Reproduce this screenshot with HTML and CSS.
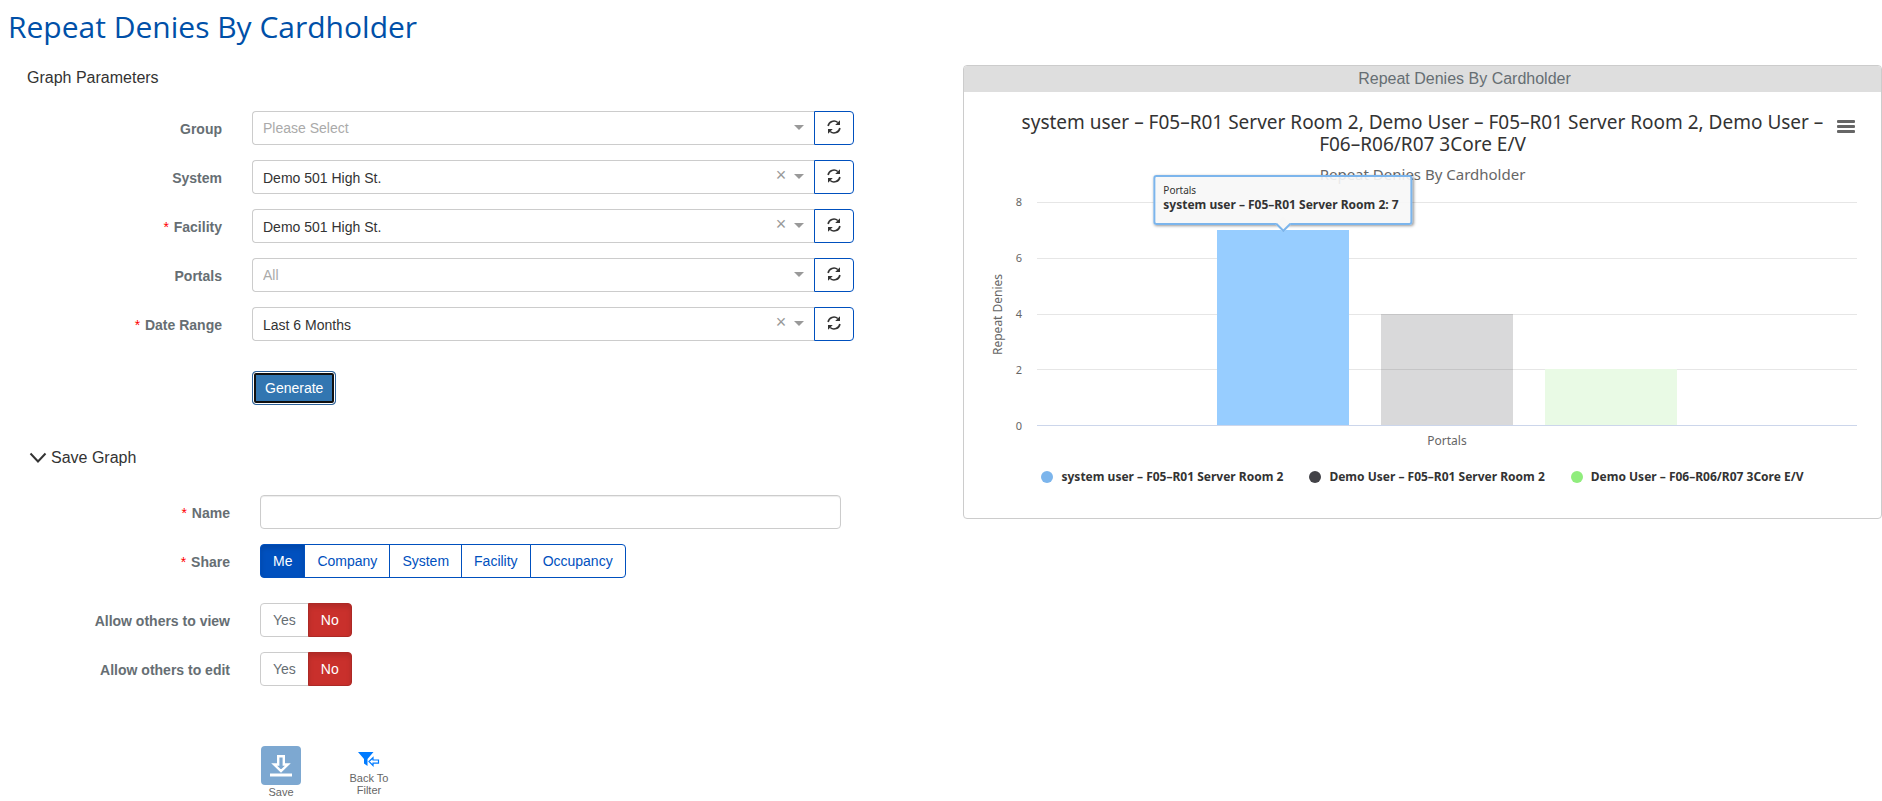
FILE: index.html
```html
<!DOCTYPE html>
<html lang="en">
<head>
<meta charset="utf-8">
<title>Repeat Denies By Cardholder</title>
<link rel="stylesheet" href="styles.css">
</head>
<body>
<svg class="sprite" aria-hidden="true">
  <symbol id="refresh" viewBox="0 0 14 14">
    <path d="M1.1 6A5.900 5.900 0 0 1 10.800 2.500" fill="none" stroke="currentColor" stroke-width="1.600"/>
    <path d="M12.900 8A5.900 5.900 0 0 1 3.200 11.500" fill="none" stroke="currentColor" stroke-width="1.600"/>
    <path d="M13 .2V5H8.200zM1 13.800V9H5.800z" fill="currentColor"/>
  </symbol>
</svg>
<h1 class="page-title">Repeat Denies By Cardholder</h1>
<main class="layout">
  <form class="params">
    <h2 class="section-title">Graph Parameters</h2>
    <div class="row">
      <label class="label" for="group">Group</label>
      <div class="picker">
        <div class="picker-box"><select id="group" class="select empty"><option>Please Select</option></select><span class="caret"></span></div>
        <button type="button" class="refresh" aria-label="Refresh group"><svg class="icon"><use href="#refresh"/></svg></button>
      </div>
    </div>
    <div class="row">
      <label class="label" for="system">System</label>
      <div class="picker">
        <div class="picker-box"><select id="system" class="select chosen"><option>Demo 501 High St.</option></select><button type="button" class="clear" aria-label="Clear system">×</button><span class="caret"></span></div>
        <button type="button" class="refresh" aria-label="Refresh system"><svg class="icon"><use href="#refresh"/></svg></button>
      </div>
    </div>
    <div class="row">
      <label class="label" for="facility"><span class="required">*</span> Facility</label>
      <div class="picker">
        <div class="picker-box"><select id="facility" class="select chosen"><option>Demo 501 High St.</option></select><button type="button" class="clear" aria-label="Clear facility">×</button><span class="caret"></span></div>
        <button type="button" class="refresh" aria-label="Refresh facility"><svg class="icon"><use href="#refresh"/></svg></button>
      </div>
    </div>
    <div class="row">
      <label class="label" for="portals">Portals</label>
      <div class="picker">
        <div class="picker-box"><select id="portals" class="select empty"><option>All</option></select><span class="caret"></span></div>
        <button type="button" class="refresh" aria-label="Refresh portals"><svg class="icon"><use href="#refresh"/></svg></button>
      </div>
    </div>
    <div class="row">
      <label class="label" for="range"><span class="required">*</span> Date Range</label>
      <div class="picker">
        <div class="picker-box"><select id="range" class="select chosen"><option>Last 6 Months</option></select><button type="button" class="clear" aria-label="Clear date range">×</button><span class="caret"></span></div>
        <button type="button" class="refresh" aria-label="Refresh date range"><svg class="icon"><use href="#refresh"/></svg></button>
      </div>
    </div>
    <div class="generate-row"><button type="button" class="generate">Generate</button></div>

    <h2 class="section-title save-title"><svg class="chevron" viewBox="0 0 18 12"><path d="M1.5 1.5L9 9.5L16.5 1.5" fill="none" stroke="currentColor" stroke-width="2"/></svg>Save Graph</h2>
    <div class="save-fields">
      <div class="row">
        <label class="label" for="name"><span class="required">*</span> Name</label>
        <input id="name" class="text" type="text">
      </div>
      <div class="row">
        <span class="label" id="share"><span class="required">*</span> Share</span>
        <div class="buttons share" role="group" aria-labelledby="share">
          <button type="button" class="seg active">Me</button><button type="button" class="seg">Company</button><button type="button" class="seg">System</button><button type="button" class="seg">Facility</button><button type="button" class="seg">Occupancy</button>
        </div>
      </div>
      <div class="row spaced">
        <span class="label" id="view">Allow others to view</span>
        <div class="buttons yesno" role="group" aria-labelledby="view"><button type="button" class="seg">Yes</button><button type="button" class="seg active">No</button></div>
      </div>
      <div class="row">
        <span class="label" id="edit">Allow others to edit</span>
        <div class="buttons yesno" role="group" aria-labelledby="edit"><button type="button" class="seg">Yes</button><button type="button" class="seg active">No</button></div>
      </div>
      <div class="actions">
        <button type="button" class="action save">
          <svg class="save-icon" viewBox="0 0 40 39"><rect width="40" height="39" rx="4" fill="#7da8d1"/><path d="M17.200 10.200h5.600v8.300h4L20 25l-6.800-6.500h4z" fill="none" stroke="#fff" stroke-width="2.400"/><path d="M9 27.500h22v3H9z" fill="#fff"/></svg>
          <span>Save</span>
        </button>
        <button type="button" class="action back">
          <svg class="filter-icon" viewBox="0 0 22 16"><path d="M0 1h15.500L9.500 8v7L6 12.500V8z" fill="#007bff"/><path d="M11 10.500l4-3.800v2.300h5.500v3.200H15v2.300z" fill="#fff" stroke="#007bff" stroke-width="1.200"/></svg>
          <span>Back To Filter</span>
        </button>
      </div>
    </div>
  </form>

  <section class="panel">
    <header class="panel-head">Repeat Denies By Cardholder</header>
    <div class="chart">
      <button type="button" class="menu" aria-label="Chart menu"><span></span><span></span><span></span></button>
      <h3 class="chart-title">system user – F05–R01 Server Room 2, Demo User – F05–R01 Server Room 2, Demo User –<br>F06–R06/R07 3Core E/V</h3>
      <p class="chart-subtitle">Repeat Denies By Cardholder</p>
      <div class="plot-area">
        <div class="axis-title">Repeat Denies</div>
        <div class="ticks"><span>8</span><span>6</span><span>4</span><span>2</span><span>0</span></div>
        <div class="plot">
          <div class="lines"><i></i><i></i><i></i><i></i></div>
          <div class="bars">
            <div class="bar blue" style="height:87.5%">
              <div class="tooltip"><small>Portals</small><b>system user – F05–R01 Server Room 2: 7</b></div>
            </div>
            <div class="bar gray" style="height:50%"></div>
            <div class="bar green" style="height:25%"></div>
          </div>
        </div>
        <div class="category">Portals</div>
      </div>
      <ul class="legend">
        <li><i class="dot blue-dot"></i>system user – F05–R01 Server Room 2</li>
        <li><i class="dot dark-dot"></i>Demo User – F05–R01 Server Room 2</li>
        <li><i class="dot green-dot"></i>Demo User – F06–R06/R07 3Core E/V</li>
      </ul>
    </div>
  </section>
</main>
</body>
</html>
```
FILE: styles.css
```css
* { box-sizing: border-box; }
body { margin: 0; background: #fff; color: #333; font: 14px/20px "Liberation Sans", Arial, sans-serif; }
button, select, input { font: inherit; margin: 0; }
button { padding: 0; cursor: pointer; }
.sprite { display: none; }
.page-title { margin: 0; padding: 7px 8px 0; font: 400 30px/40px "Open Sans", sans-serif; color: #0050a8; }
.layout { display: grid; grid-template-columns: 963fr 919fr; align-items: start; padding-top: 18px; }
.params { padding-right: 109px; }
.section-title { margin: 0 0 22px; padding: 1px 0 0 27px; font-size: 16px; line-height: 23px; font-weight: 400; }
.row { display: grid; grid-template-columns: 222px minmax(0, 1fr); column-gap: 30px; margin-bottom: 15px; }
.label { padding-top: 8px; text-align: right; font-weight: 700; color: #666e73; }
.required { color: #f00; font-weight: 400; margin-right: 1px; }
.picker { display: flex; }
.picker-box { position: relative; flex: 1; }
.select { display: block; width: 100%; height: 34px; padding: 0 60px 0 10px; appearance: none; border: 1px solid #ccc; border-right: 0; border-radius: 4px 0 0 4px; background: #fff; color: #333; }
.chosen { padding-top: 2px; }
.empty { color: #aaa; }
.caret { position: absolute; right: 10px; top: 14px; border: 5px solid transparent; border-top-color: #999; border-bottom: 0; pointer-events: none; }
.clear { position: absolute; right: 26px; top: 5px; width: 14px; border: 0; background: none; color: #999; font-size: 18px; line-height: 20px; }
.refresh { display: grid; place-items: center; width: 40px; height: 34px; border: 1px solid #0050be; border-radius: 0 4px 4px 0; background: #fff; color: #333; }
.icon { width: 14px; height: 14px; margin-bottom: 2px; }
.generate-row { padding: 15px 0 0 252px; }
.generate { display: block; height: 34px; padding: 0 12px; border: 1px solid #2c629b; border-radius: 4px; background: #3276b1; color: #fff; box-shadow: inset 0 0 0 1px #fff, inset 0 0 0 3px #101010; }
.save-title { display: flex; align-items: center; gap: 4px; margin: 40px 0 26px; }
.chevron { width: 18px; height: 12px; margin-left: 2px; }
.save-fields .row { grid-template-columns: 230px minmax(0, 1fr); padding-right: 13px; }
.text { height: 34px; width: 100%; padding: 6px 12px; border: 1px solid #ccc; border-radius: 4px; box-shadow: inset 0 1px 1px rgba(0, 0, 0, .075); }
.buttons { display: flex; }
.seg { height: 34px; padding: 0 12px; border: 1px solid #0050be; background: #fff; color: #0050be; }
.seg + .seg { margin-left: -1px; }
.seg:first-child { border-radius: 4px 0 0 4px; }
.seg:last-child { border-radius: 0 4px 4px 0; }
.share .active { background: #0050be; color: #fff; box-shadow: inset 0 3px 5px rgba(0, 0, 0, .125); }
.yesno .seg { border-color: #ccc; color: #666e73; }
.yesno .seg.active { border-color: #ac2925; background: #c9302c; color: #fff; box-shadow: inset 0 3px 5px rgba(0, 0, 0, .125); }
.spaced { margin-top: 25px; }
.actions { display: flex; gap: 42px; padding: 45px 0 0 261px; align-items: flex-start; }
.action { display: flex; flex-direction: column; align-items: center; border: 0; background: none; color: #666; font-size: 11px; line-height: 12px; }
.save-icon { width: 40px; height: 39px; margin-bottom: 1px; }
.back { width: 52px; padding-top: 5px; }
.filter-icon { width: 22px; height: 16px; margin-bottom: 5px; }

.panel { border: 1px solid #ccc; border-radius: 4px; overflow: hidden; }
.panel-head { padding-left: 84px; background: #dedede; color: #666e73; font-size: 16px; line-height: 26px; text-align: center; }
.chart { position: relative; padding: 19px 24px 31px; font-family: "Noto Sans", "Open Sans", sans-serif; }
.menu { position: absolute; right: 26px; top: 28px; display: grid; gap: 2px; width: 18px; border: 0; background: none; }
.menu span { height: 3px; border-radius: 1px; background: #666; }
.chart-title { margin: 0; padding: 0 30px; font-size: 19px; line-height: 22px; font-weight: 400; text-align: center; color: #333; }
.chart-subtitle { margin: 9px 0 18px; font-size: 15px; line-height: 20px; text-align: center; color: #666; }
.plot-area { display: grid; grid-template-columns: 20px 29px minmax(0, 1fr); color: #666; font-size: 11px; }
.axis-title { writing-mode: vertical-rl; transform: rotate(180deg); text-align: center; line-height: 20px; font-size: 12px; }
.ticks { display: flex; flex-direction: column; justify-content: space-between; margin: -8px 0; padding-right: 7px; line-height: 16px; text-align: center; }
.plot { display: grid; height: 224px; border-bottom: 1px solid #ccd6eb; }
.lines, .bars { grid-area: 1 / 1; }
.lines { display: grid; grid-template-rows: repeat(4, 1fr); }
.lines i { border-top: 1px solid #e6e6e6; }
.bars { display: flex; align-items: flex-end; }
.bar { position: relative; width: 16%; margin-left: 4%; }
.bar:first-child { margin-left: 22%; }
.blue { background: #97cdff; }
.gray { background: rgba(67, 67, 72, .2); }
.green { background: #e9fae5; }
.tooltip { position: absolute; left: 50%; bottom: 100%; transform: translateX(-50%); margin-bottom: 5px; padding: 6px 12px 11px 8px; border: 2px solid #7cb5ec; border-radius: 3px; background: rgba(247, 247, 247, .9); box-shadow: 1px 1px 3px rgba(0, 0, 0, .4); color: #333; white-space: nowrap; font-size: 12px; line-height: 15px; }
.tooltip small, .tooltip b { display: block; }
.tooltip small { font-size: 10px; line-height: 14px; }
.tooltip::after { content: ""; position: absolute; left: 50%; top: 100%; width: 9px; height: 9px; transform: translate(-50%, -4px) rotate(45deg); border: solid #7cb5ec; border-width: 0 2px 2px 0; background: #f7f7f7; }
.category { grid-column: 3; padding-top: 6px; text-align: center; line-height: 18px; font-size: 12px; }
.legend { display: flex; justify-content: center; gap: 26px; margin: 17px 0 0; padding: 0; list-style: none; font-size: 12px; line-height: 20px; font-weight: 700; color: #333; }
.legend li { display: flex; align-items: center; gap: 8px; }
.dot { width: 12px; height: 12px; border-radius: 50%; }
.blue-dot { background: #7cb5ec; }
.dark-dot { background: #434348; }
.green-dot { background: #90ed7d; }
```
